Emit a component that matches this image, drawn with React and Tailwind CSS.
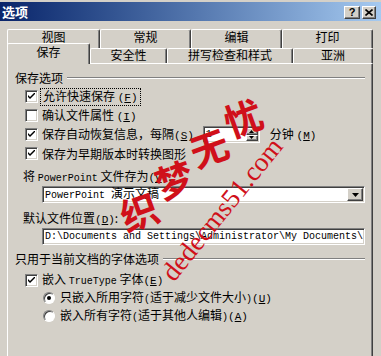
import React from "react";

const raised =
  "border border-t-white border-l-white border-b-[#404040] border-r-[#404040] shadow-[inset_-1px_-1px_#808080]";
const sunken =
  "border border-t-[#808080] border-l-[#808080] border-b-white border-r-white shadow-[inset_1px_1px_#404040,inset_-1px_-1px_#d4d0c8]";

const M = ({ children, className = "" }) => (
  <span className={"font-['Liberation_Mono',monospace] text-[10px] " + className}>{children}</span>
);

const K = ({ k }) => (
  <span className="font-['Liberation_Mono',monospace] text-[11px]">
    (<span className="underline">{k}</span>)
  </span>
);

function Check({ on }) {
  return (
    <div className={"w-[13px] h-[13px] bg-white shrink-0 flex items-center justify-center " + sunken}>
      {on && (
        <svg width="7" height="7" viewBox="0 0 7 7">
          <path d="M0 2 L0 4 L2 6 L7 1 L7 -1 L2 4 Z" fill="#000" />
        </svg>
      )}
    </div>
  );
}

function Radio({ on }) {
  return (
    <div className="w-[12px] h-[12px] rounded-full bg-white shrink-0 flex items-center justify-center border border-t-[#808080] border-l-[#808080] border-b-white border-r-white shadow-[inset_1px_1px_#404040]">
      {on && <div className="w-[4px] h-[4px] rounded-full bg-black" />}
    </div>
  );
}

function GroupLabel({ children }) {
  return (
    <div className="flex items-center h-[12px] leading-[12px]">
      <span>{children}</span>
      <div className="flex-1 ml-[4px] h-[2px] border-t border-t-[#808080] border-b border-b-white" />
    </div>
  );
}

function BackTab({ label, w }) {
  return (
    <div
      className={"h-[19px] pt-[1px] text-center leading-[12px] border-t border-l border-t-white border-l-white border-r border-r-[#404040] shadow-[inset_-1px_0_#808080] rounded-t-[2px] " + w}
    >
      {label}
    </div>
  );
}

function FrontTab({ label, w, selected }) {
  if (selected)
    return (
      <div
        className={"h-[21px] -mb-[1px] pt-[2px] text-center leading-[12px] bg-[#d4d0c8] relative z-10 border-t border-l border-t-white border-l-white border-r border-r-[#404040] shadow-[inset_-1px_0_#808080] rounded-t-[2px] " + w}
      >
        {label}
      </div>
    );
  return (
    <div
      className={"h-[15px] text-center leading-[12px] bg-[#d4d0c8] border-t border-l border-t-white border-l-white border-r border-r-[#404040] shadow-[inset_-1px_0_#808080] rounded-t-[2px] " + w}
    >
      {label}
    </div>
  );
}

export default function App() {
  return (
    <div className="w-[381px] h-[356px] bg-[#d4d0c8] relative overflow-hidden font-['Noto_Sans_CJK_SC',sans-serif] text-[12px] text-black">
      {/* title bar */}
      <div className="mt-[2px] h-[19px] bg-gradient-to-r from-[#0a246a] to-[#a6caf0] flex items-center justify-between pl-[2px] pr-[5px]">
        <span className="text-white font-bold text-[13px] leading-[13px]">选项</span>
        <div className="flex gap-[2px] mt-[2px]">
          <div className={"w-[16px] h-[13px] bg-[#d4d0c8] flex items-center justify-center text-[11px] font-bold leading-none " + raised}>
            <span className="font-['Liberation_Sans',sans-serif]">?</span>
          </div>
          <div className={"w-[14px] h-[13px] bg-[#d4d0c8] flex items-center justify-center " + raised}>
            <svg width="8" height="7" viewBox="0 0 8 7">
              <path d="M0.5 0.5 L7.5 6.5 M7.5 0.5 L0.5 6.5" stroke="#000" strokeWidth="1.6" />
            </svg>
          </div>
        </div>
      </div>

      {/* tabs */}
      <div className="flex ml-[7px] mt-[8px]">
        <BackTab label="视图" w="w-[93px]" />
        <BackTab label="常规" w="w-[91px]" />
        <BackTab label="编辑" w="w-[91px]" />
        <BackTab label="打印" w="w-[91px]" />
      </div>
      <div className="flex items-end ml-[7px] h-[15px] relative z-10">
        <FrontTab label="保存" w="w-[83px]" selected />
        <FrontTab label="安全性" w="w-[77px]" />
        <FrontTab label="拼写检查和样式" w="w-[126px]" />
        <FrontTab label="亚洲" w="w-[80px]" />
      </div>

      {/* panel */}
      <div className="ml-[7px] w-[366px] h-[293px] border-t border-l border-t-white border-l-white border-r border-r-[#404040] shadow-[inset_-1px_0_#808080] pt-[8px] pl-[7px] pr-[7px] leading-[12px]">
        <GroupLabel>保存选项</GroupLabel>
        <div className="mt-[3px] pl-[10px]">
          <div className="h-[19px] flex items-center">
            <Check on />
            <span className="ml-[2px] px-[2px] py-[1px] border border-dotted border-black">
              允许快速保存 <K k="F" />
            </span>
          </div>
          <div className="h-[19px] flex items-center">
            <Check />
            <span className="ml-[4px]">
              确认文件属性 <K k="I" />
            </span>
          </div>
          <div className="h-[19px] flex items-center">
            <Check on />
            <span className="ml-[4px]">
              保存自动恢复信息，每隔<K k="S" />
            </span>
            <div className={"ml-[9px] w-[57px] h-[17px] bg-white flex items-center justify-between " + sunken}>
              <M className="ml-[2px]">1</M>
              <div className="w-[12px] h-[13px] mr-[1px] flex flex-col bg-[#d4d0c8]">
                <div className={"flex-1 flex items-center justify-center " + raised}>
                  <svg width="5" height="3" viewBox="0 0 5 3"><path d="M0 3 L2.5 0 L5 3 Z" fill="#000" /></svg>
                </div>
                <div className={"flex-1 flex items-center justify-center " + raised}>
                  <svg width="5" height="3" viewBox="0 0 5 3"><path d="M0 0 L2.5 3 L5 0 Z" fill="#000" /></svg>
                </div>
              </div>
            </div>
            <span className="ml-[10px]">
              分钟 <K k="M" />
            </span>
          </div>
          <div className="h-[19px] flex items-center">
            <Check on />
            <span className="ml-[4px]">保存为早期版本时转换图形</span>
          </div>
        </div>

        <div className="mt-[7px] pl-[8px] h-[12px]">
          将 <M>PowerPoint</M> 文件存为<K k="V" />:
        </div>
        <div className={"mt-[4px] ml-[27px] w-[323px] h-[17px] bg-white flex items-center justify-between " + sunken}>
          <span className="ml-[2px]">
            <M>PowerPoint </M>演示文稿
          </span>
          <div className={"w-[16px] h-[13px] mr-[1px] bg-[#d4d0c8] flex items-center justify-center " + raised}>
            <svg width="7" height="4" viewBox="0 0 7 4"><path d="M0 0 L3.5 4 L7 0 Z" fill="#000" /></svg>
          </div>
        </div>

        <div className="mt-[9px] pl-[8px] h-[12px]">
          默认文件位置<K k="D" />:
        </div>
        <div className={"mt-[4px] ml-[27px] w-[323px] h-[17px] bg-white flex items-center overflow-hidden whitespace-nowrap " + sunken}>
          <M className="ml-[2px]">D:\Documents and Settings\Administrator\My Documents\</M>
        </div>

        <div className="mt-[8px]">
          <GroupLabel>只用于当前文档的字体选项</GroupLabel>
        </div>
        <div className="mt-[6px] pl-[10px]">
          <div className="h-[18px] flex items-center">
            <Check on />
            <span className="ml-[4px]">
              嵌入 <M>TrueType</M> 字体<K k="E" />
            </span>
          </div>
          <div className="h-[18px] flex items-center pl-[18px]">
            <Radio on />
            <span className="ml-[5px]">
              只嵌入所用字符<M>(</M>适于减少文件大小<M>)</M><K k="U" />
            </span>
          </div>
          <div className="h-[18px] flex items-center pl-[18px]">
            <Radio />
            <span className="ml-[5px]">
              嵌入所有字符<M>(</M>适于其他人编辑<M>)</M><K k="A" />
            </span>
          </div>
        </div>
      </div>

      {/* watermark */}
      <div className="absolute inset-0 pointer-events-none z-20 text-[#d0101a] font-bold font-['Noto_Sans_CJK_SC',serif]">
        <span className="absolute left-[120px] top-[192px] text-[38px] leading-none -rotate-[20deg]">织</span>
        <span className="absolute left-[155px] top-[160px] text-[38px] leading-none -rotate-[20deg]">梦</span>
        <span className="absolute left-[190px] top-[128px] text-[38px] leading-none -rotate-[20deg]">无</span>
        <span className="absolute left-[224px] top-[98px] text-[38px] leading-none -rotate-[20deg]">忧</span>
        <span className="absolute left-[135px] top-[196px] font-['Liberation_Serif',serif] font-normal text-[27px] leading-none -rotate-[51deg] whitespace-nowrap">
          dedecms51.com
        </span>
      </div>
    </div>
  );
}
